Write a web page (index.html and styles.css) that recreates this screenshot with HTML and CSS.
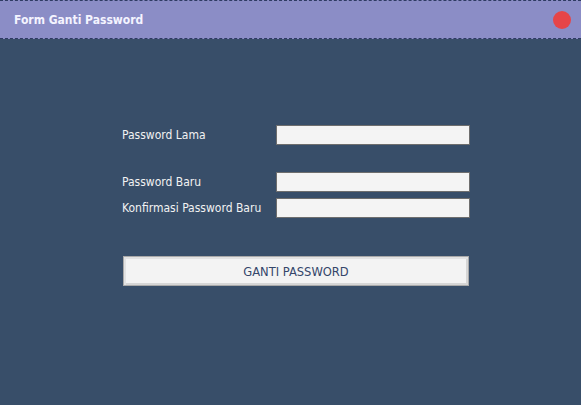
FILE: index.html
```html
<!DOCTYPE html>
<html>
<head>
<meta charset="utf-8">
<link rel="stylesheet" href="styles.css">
</head>
<body>
<div class="window">
  <div class="titlebar">
    <span class="title">Form Ganti Password</span>
    <span class="close"></span>
  </div>
  <div class="content">
    <div class="form">
      <div class="row">
        <label class="label">Password Lama</label>
        <input class="field" type="password">
      </div>
      <div class="row row-gap">
        <label class="label">Password Baru</label>
        <input class="field" type="password">
      </div>
      <div class="row row-tight">
        <label class="label">Konfirmasi Password Baru</label>
        <input class="field" type="password">
      </div>
      <button class="btn">GANTI PASSWORD</button>
    </div>
  </div>
</div>
</body>
</html>
```

FILE: styles.css
```css
html, body {
  margin: 0;
  padding: 0;
  background: #384e69;
}
.window {
  width: 581px;
  height: 405px;
  display: flex;
  flex-direction: column;
  background: #384e69;
  font-family: "DejaVu Sans Condensed", "DejaVu Sans", sans-serif;
  font-stretch: condensed;
}
.titlebar {
  height: 37px;
  background: #8b8dc6;
  border-top: 1px dashed #2f3b63;
  border-bottom: 1px dashed #2f3b63;
  display: flex;
  align-items: center;
  justify-content: space-between;
  padding: 0 10px 0 14px;
}
.title {
  color: #f4f4ff;
  font-weight: bold;
  font-size: 12px;
}
.close {
  width: 18px;
  height: 18px;
  border-radius: 50%;
  background: #e64548;
}
.content {
  flex: 1;
  padding: 86px 0 0 122px;
}
.form {
  width: 348px;
  display: flex;
  flex-direction: column;
}
.row {
  display: flex;
  align-items: center;
  height: 20px;
}
.row-gap { margin-top: 27px; }
.row-tight { margin-top: 6px; }
.label {
  width: 154px;
  color: #f2f2f2;
  font-size: 12px;
}
.field {
  box-sizing: border-box;
  width: 194px;
  height: 20px;
  margin: 0;
  padding: 0 3px;
  background: #f4f4f4;
  border: 1px solid #6e6e6e;
  border-radius: 0;
  outline: none;
}
.btn {
  box-sizing: border-box;
  margin: 38px 0 0 1px;
  width: 346px;
  height: 30px;
  background: #f3f3f3;
  border: 1px solid #a9a9a9;
  box-shadow: inset 2px 2px 0 #e2e2e2, inset -2px -2px 0 #d6d6d6;
  color: #34466a;
  font-family: "DejaVu Sans Condensed", "DejaVu Sans", sans-serif;
  font-stretch: condensed;
  font-size: 12.8px;
  padding: 0;
}
```
